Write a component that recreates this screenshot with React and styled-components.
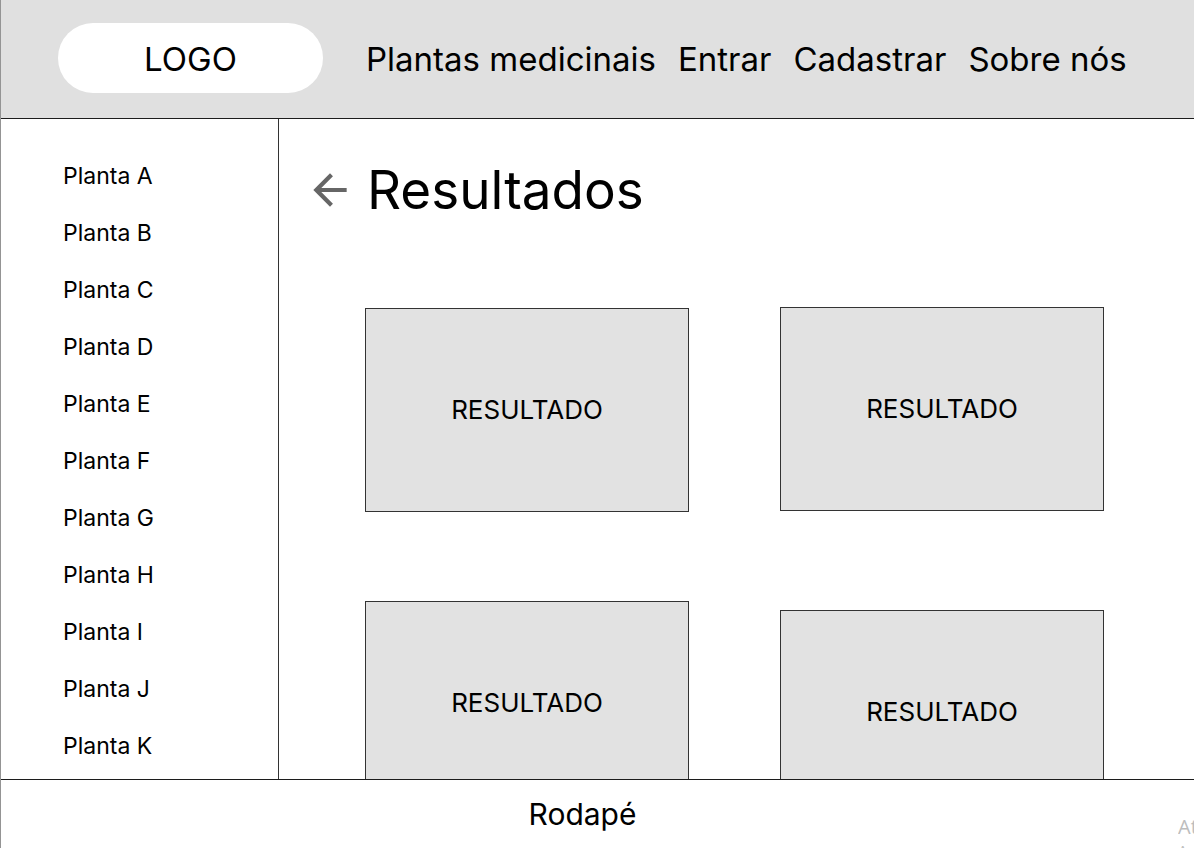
import React from "react";
import styled, { createGlobalStyle } from "styled-components";

const GlobalStyle = createGlobalStyle`
  *, *::before, *::after { box-sizing: border-box; }
  body {
    margin: 0;
    background: #fff;
    color: #000;
    font-family: Inter, "Liberation Sans", sans-serif;
  }
  h1, p, ul { margin: 0; padding: 0; font-weight: 400; }
`;

const Page = styled.div`
  position: relative;
  display: flex;
  flex-direction: column;
  height: 100vh;
  overflow: hidden;
  border-left: 1px solid #949494;
`;

const Header = styled.header`
  display: flex;
  align-items: center;
  gap: 43px;
  flex: none;
  padding: 23px 57px 25px;
  background: #e0e0e0;
  border-bottom: 1px solid #1c1c1c;
`;

const Logo = styled.a`
  flex: 0 0 265px;
  padding-top: 2px;
  border-radius: 35px;
  background: #fff;
  color: inherit;
  font-size: 33px;
  line-height: 68px;
  text-align: center;
  text-decoration: none;
`;

const Nav = styled.nav`
  display: flex;
  gap: 22px;
  padding-top: 2px;
`;

const NavLink = styled.a`
  color: inherit;
  font-size: 33px;
  line-height: 68px;
  text-decoration: none;
  white-space: nowrap;
`;

const Body = styled.div`
  display: flex;
  flex: 1;
  min-height: 0;
`;

const Sidebar = styled.aside`
  flex: 0 0 278px;
  padding: 43px 24px 0 62px;
  border-right: 1px solid #333;
  overflow: hidden;
`;

const PlantList = styled.ul`
  display: flex;
  flex-direction: column;
  gap: 28px;
  list-style: none;
`;

const PlantLink = styled.a`
  display: block;
  color: inherit;
  font-size: 23px;
  line-height: 29px;
  text-decoration: none;
`;

const Main = styled.main`
  flex: 1;
  min-width: 0;
  padding: 38px 90px 0 26px;
  overflow: hidden;
`;

const TitleRow = styled.div`
  display: flex;
  align-items: center;
  gap: 12px;
`;

const BackButton = styled.button`
  display: flex;
  padding: 0;
  border: 0;
  background: none;
  color: #666;
  cursor: pointer;
`;

const Title = styled.h1`
  font-size: 53px;
  line-height: 66px;
`;

const Results = styled.div`
  display: flex;
  gap: 91px;
  padding: 84px 0 0 60px;
`;

const Column = styled.div`
  display: flex;
  flex: 1;
  flex-direction: column;
  gap: ${({ $gap }) => $gap}px;
  padding-top: ${({ $top }) => $top}px;
`;

const Card = styled.a`
  display: flex;
  align-items: center;
  justify-content: center;
  flex: none;
  height: 204px;
  border: 1px solid #333;
  background: #e2e2e2;
  color: inherit;
  font-size: 26px;
  line-height: 32px;
  text-decoration: none;
`;

const Footer = styled.footer`
  flex: none;
  padding: 16px 30px 16px 0;
  border-top: 1px solid #1c1c1c;
  font-size: 30px;
  line-height: 36px;
  text-align: center;
`;

const Watermark = styled.div`
  position: absolute;
  right: 0;
  bottom: -12px;
  width: 16px;
  overflow: hidden;
  color: #bdbdbd;
  font-family: "Open Sans", sans-serif;
  white-space: nowrap;
`;

const WatermarkTitle = styled.p`
  font-size: 20px;
  line-height: 26px;
`;

const WatermarkText = styled.p`
  font-size: 15px;
  line-height: 20px;
`;

const links = ["Plantas medicinais", "Entrar", "Cadastrar", "Sobre nós"];
const plants = ["A", "B", "C", "D", "E", "F", "G", "H", "I", "J", "K"];
const columns = [
  { id: "left", top: 1, gap: 89 },
  { id: "right", top: 0, gap: 99 },
];

export default function App() {
  return (
    <>
      <GlobalStyle />
      <Page>
        <Header>
          <Logo href="#">LOGO</Logo>
          <Nav>
            {links.map((label) => (
              <NavLink key={label} href="#">{label}</NavLink>
            ))}
          </Nav>
        </Header>
        <Body>
          <Sidebar>
            <PlantList>
              {plants.map((letter) => (
                <li key={letter}>
                  <PlantLink href="#">Planta {letter}</PlantLink>
                </li>
              ))}
            </PlantList>
          </Sidebar>
          <Main>
            <TitleRow>
              <BackButton type="button" aria-label="Voltar">
                <svg width="50" height="50" viewBox="0 0 24 24" fill="currentColor" aria-hidden="true">
                  <path d="M20 11H7.83l5.59-5.59L12 4l-8 8 8 8 1.41-1.41L7.83 13H20v-2z" />
                </svg>
              </BackButton>
              <Title>Resultados</Title>
            </TitleRow>
            <Results>
              {columns.map(({ id, top, gap }) => (
                <Column key={id} $top={top} $gap={gap}>
                  <Card href="#">RESULTADO</Card>
                  <Card href="#">RESULTADO</Card>
                </Column>
              ))}
            </Results>
          </Main>
        </Body>
        <Footer>Rodapé</Footer>
        <Watermark>
          <WatermarkTitle>At</WatermarkTitle>
          <WatermarkText>Ac</WatermarkText>
        </Watermark>
      </Page>
    </>
  );
}
